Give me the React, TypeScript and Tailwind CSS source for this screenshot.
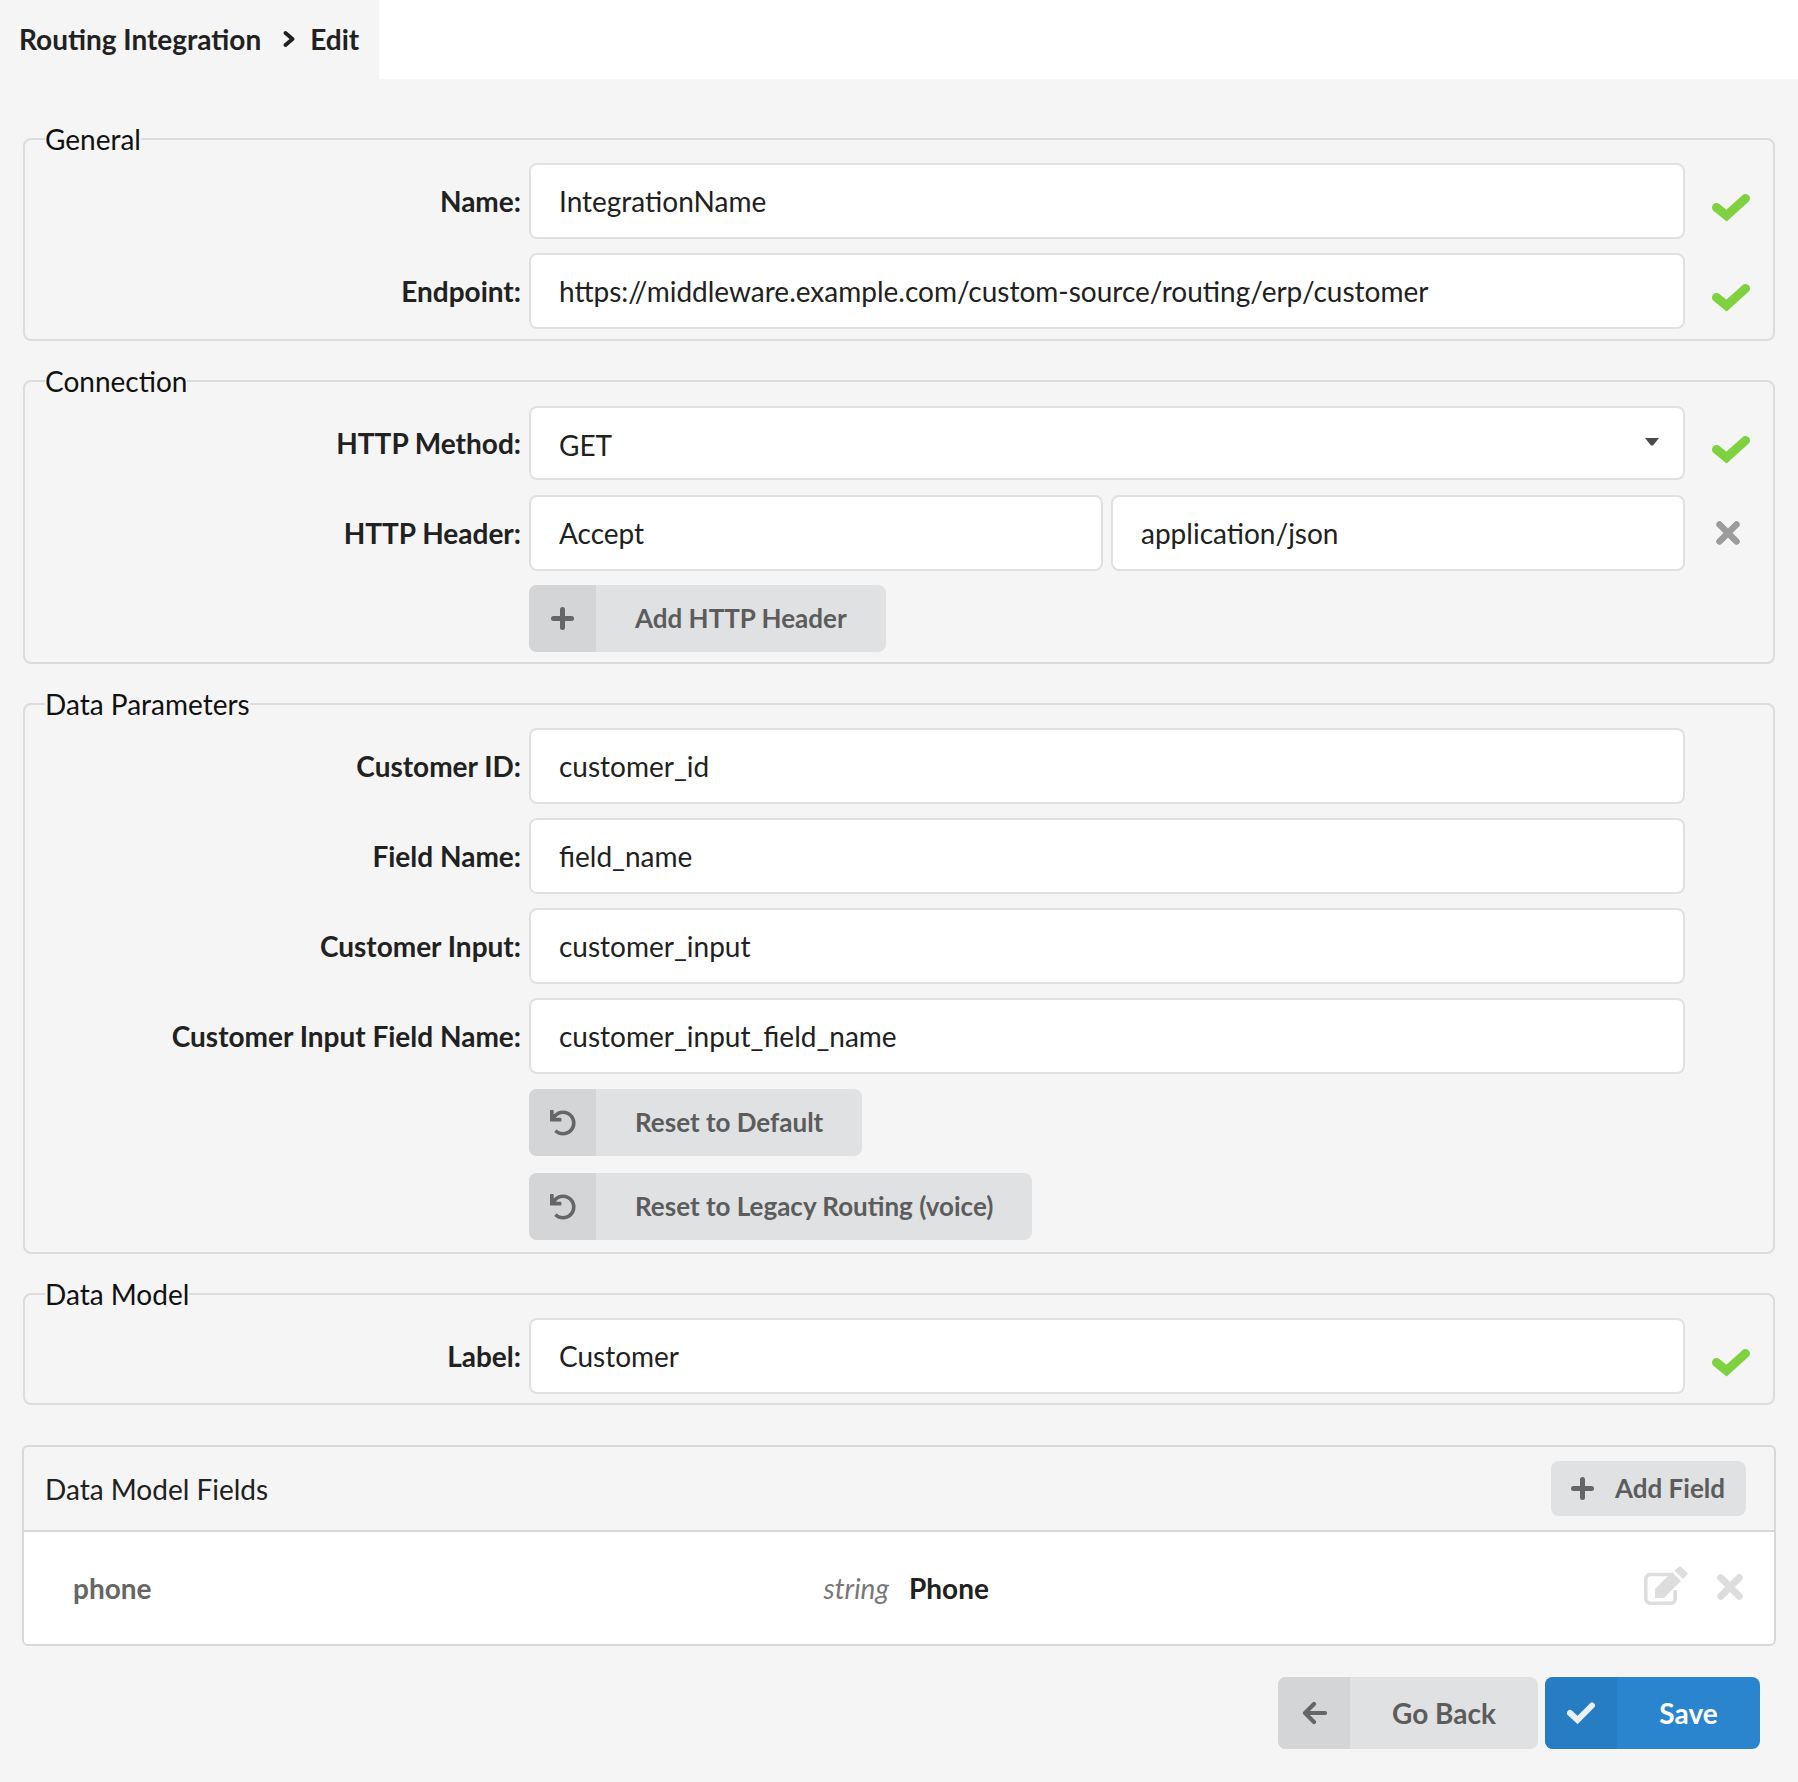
import React from "react";
import { FaUndo } from "react-icons/fa";

const font = "font-['Lato',sans-serif]";

function Check({ className = "" }: { className?: string }) {
  return (
    <svg viewBox="0 0 38 28" className={"h-[28px] w-[38px] " + className} fill="none" stroke="currentColor" strokeWidth="9" strokeLinecap="round" strokeLinejoin="miter">
      <path d="M4.5 13.5 L14.5 21.5 L33.5 4.5" />
    </svg>
  );
}

function Cross({ className = "" }: { className?: string }) {
  return (
    <svg viewBox="0 0 24 24" className={className} fill="none" stroke="currentColor" strokeWidth="6.5" strokeLinecap="round">
      <path d="M3.5 3.5 L20.5 20.5 M20.5 3.5 L3.5 20.5" />
    </svg>
  );
}

function Plus({ className = "" }: { className?: string }) {
  return (
    <svg viewBox="0 0 23 23" className={className} fill="none" stroke="currentColor" strokeWidth="5" strokeLinecap="round">
      <path d="M11.5 2.5 V20.5 M2.5 11.5 H20.5" />
    </svg>
  );
}

function EditIcon({ className = "" }: { className?: string }) {
  return (
    <svg viewBox="0 0 44 40" className={className}>
      <path d="M27 8.5 H6 A4.5 4.5 0 0 0 1.8 13 V33 A4.5 4.5 0 0 0 6 37.2 H27 A4.5 4.5 0 0 0 31.2 33 V24" fill="none" stroke="currentColor" strokeWidth="3.6" />
      <path d="M11 23 L28 6 L37 15 L20 32 L11 32 Z" fill="currentColor" />
      <path d="M31.5 4.5 L36 1 L43 7.5 L39 12 Z" fill="currentColor" stroke="currentColor" strokeWidth="1.5" strokeLinejoin="round" />
    </svg>
  );
}

function Field({ value }: { value: string }) {
  return (
    <input
      readOnly
      value={value}
      className={"h-[76px] w-full min-w-0 flex-1 rounded-[8px] border-2 border-[#e0e0e0] bg-white pl-[28px] text-[28px] text-[#212121] outline-none " + font}
    />
  );
}

function Row({ label, children, status, className = "" }: { label: string; children: React.ReactNode; status?: "ok" | "remove"; className?: string }) {
  return (
    <div className={"flex items-center " + className}>
      <label className="w-[496px] shrink-0 text-right text-[28px] font-bold leading-none text-[#212121]">{label}</label>
      <div className="ml-[8px] flex min-w-0 flex-1 gap-[8px]">{children}</div>
      <div className="flex w-[88px] shrink-0 items-center">
        {status === "ok" && <Check className="ml-[27px] mt-[13px] text-[#7fd23f]" />}
        {status === "remove" && <Cross className="ml-[31px] h-[24px] w-[24px] text-[#9c9c9c]" />}
      </div>
    </div>
  );
}

function Section({ title, children, className = "", contentClass = "" }: { title: string; children: React.ReactNode; className?: string; contentClass?: string }) {
  return (
    <fieldset className={"rounded-[8px] border-2 border-[#dcdcdc] " + className}>
      <legend className="ml-[20px] h-[40px] text-[28px] leading-[40px] text-[#111]">{title}</legend>
      <div className={contentClass}>{children}</div>
    </fieldset>
  );
}

function IconButton({ icon, label }: { icon: React.ReactNode; label: string }) {
  return (
    <button className="flex h-[67px] items-stretch overflow-hidden rounded-[8px] bg-[#e0e1e2] text-[26px] font-bold text-[#5c5c5c]">
      <span className="flex w-[67px] items-center justify-center bg-[#d4d5d7] text-[#666]">{icon}</span>
      <span className="flex items-center pl-[39px] pr-[39px]">{label}</span>
    </button>
  );
}

export default function App() {
  return (
    <div className={"min-h-[1782px] w-full bg-[#f5f5f5] " + font}>
      <div className="flex h-[79px] bg-white">
        <div className="flex h-full w-[379px] items-center bg-[#f5f5f5] pb-[2px] pl-[19px] text-[28px] font-bold text-[#212121]">
          <span>Routing Integration</span>
          <svg viewBox="0 0 14 16" className="ml-[21px] mr-[14px] h-[16px] w-[14px]" fill="none" stroke="currentColor" strokeWidth="3.8" strokeLinecap="round" strokeLinejoin="round">
            <path d="M3.5 2 L10.5 8 L3.5 14" />
          </svg>
          <span>Edit</span>
        </div>
      </div>

      <div className="ml-[23px] mr-[23px]">
        <Section title="General" className="mt-[40px] pb-[10px]" contentClass="mt-[4px]">
          <Row label="Name:" status="ok">
            <Field value="IntegrationName" />
          </Row>
          <Row label="Endpoint:" status="ok" className="mt-[14px]">
            <Field value="https://middleware.example.com/custom-source/routing/erp/customer" />
          </Row>
        </Section>

        <Section title="Connection" className="mt-[20px] pb-[10px]" contentClass="mt-[5px]">
          <Row label="HTTP Method:" status="ok">
            <div className="flex h-[74px] flex-1 items-center justify-between rounded-[8px] border-2 border-[#e0e0e0] bg-white pl-[28px] pr-[24px] text-[28px] text-[#212121]">
              <span className="mt-[4px]">GET</span>
              <svg viewBox="0 0 14 8" className="mb-[2px] h-[8px] w-[14px] text-[#4a4a4a]" fill="currentColor">
                <path d="M0 0 H14 L8 7.5 H6 Z" />
              </svg>
            </div>
          </Row>
          <Row label="HTTP Header:" status="remove" className="mt-[15px]">
            <Field value="Accept" />
            <Field value="application/json" />
          </Row>
          <div className="ml-[504px] mt-[14px]">
            <IconButton icon={<Plus className="h-[23px] w-[23px]" />} label="Add HTTP Header" />
          </div>
        </Section>

        <Section title="Data Parameters" className="mt-[20px] pb-[12px]" contentClass="mt-[4px]">
          <Row label="Customer ID:"><Field value="customer_id" /></Row>
          <Row label="Field Name:" className="mt-[14px]"><Field value="field_name" /></Row>
          <Row label="Customer Input:" className="mt-[14px]"><Field value="customer_input" /></Row>
          <Row label="Customer Input Field Name:" className="mt-[14px]"><Field value="customer_input_field_name" /></Row>
          <div className="ml-[504px] mt-[15px] flex flex-col items-start gap-[17px]">
            <IconButton icon={<FaUndo size={26} />} label="Reset to Default" />
            <IconButton icon={<FaUndo size={26} />} label="Reset to Legacy Routing (voice)" />
          </div>
        </Section>

        <Section title="Data Model" className="mt-[20px] pb-[9px]" contentClass="mt-[4px]">
          <Row label="Label:" status="ok"><Field value="Customer" /></Row>
        </Section>

        <div className="-mx-[1px] mt-[40px] overflow-hidden rounded-[6px] border-2 border-[#d8d8d8]">
          <div className="flex h-[85px] items-center justify-between border-b-2 border-[#d8d8d8] pl-[21px] pr-[28px]">
            <span className="text-[28px] text-[#212121]">Data Model Fields</span>
            <button className="flex h-[55px] items-center rounded-[8px] bg-[#e0e1e2] pl-[20px] pr-[21px] text-[26px] font-bold text-[#5c5c5c]">
              <Plus className="mr-[21px] h-[23px] w-[23px] text-[#666]" />
              Add Field
            </button>
          </div>
          <div className="flex h-[112px] items-center bg-white pl-[49px] text-[28px]">
            <span className="w-[728px] font-bold text-[#666]">phone</span>
            <span className="w-[88px] text-right italic text-[#777]">string</span>
            <span className="ml-[20px] font-bold text-[#212121]">Phone</span>
            <EditIcon className="mb-[4px] ml-auto h-[40px] w-[44px] text-[#dddddd]" />
            <Cross className="mb-[2px] ml-[29px] mr-[31px] h-[26px] w-[26px] text-[#ddd]" />
          </div>
        </div>

        <div className="mt-[31px] flex justify-end gap-[7px] pr-[15px]">
          <button className="flex h-[72px] w-[260px] items-stretch overflow-hidden rounded-[8px] bg-[#e0e1e2] text-[28px] font-bold text-[#5c5c5c]">
            <span className="flex w-[72px] items-center justify-center bg-[#d4d5d7] text-[#666]">
              <svg viewBox="0 0 25 24" className="h-[24px] w-[25px]" fill="none" stroke="currentColor" strokeWidth="4.2" strokeLinecap="round" strokeLinejoin="round">
                <path d="M3 12 H23 M12 3 L3 12 L12 21" />
              </svg>
            </span>
            <span className="flex-1 text-center leading-[72px]">Go Back</span>
          </button>
          <button className="flex h-[72px] w-[215px] items-stretch overflow-hidden rounded-[8px] bg-[#2a85ce] text-[28px] font-bold text-white">
            <span className="flex w-[72px] items-center justify-center bg-[#277dc1] text-[#e8f1f9]">
              <svg viewBox="0 0 28 22" className="h-[22px] w-[28px]" fill="none" stroke="currentColor" strokeWidth="6" strokeLinecap="round" strokeLinejoin="miter">
                <path d="M3 11 L10.5 18 L25 3.5" />
              </svg>
            </span>
            <span className="flex-1 text-center leading-[72px]">Save</span>
          </button>
        </div>
      </div>
    </div>
  );
}
